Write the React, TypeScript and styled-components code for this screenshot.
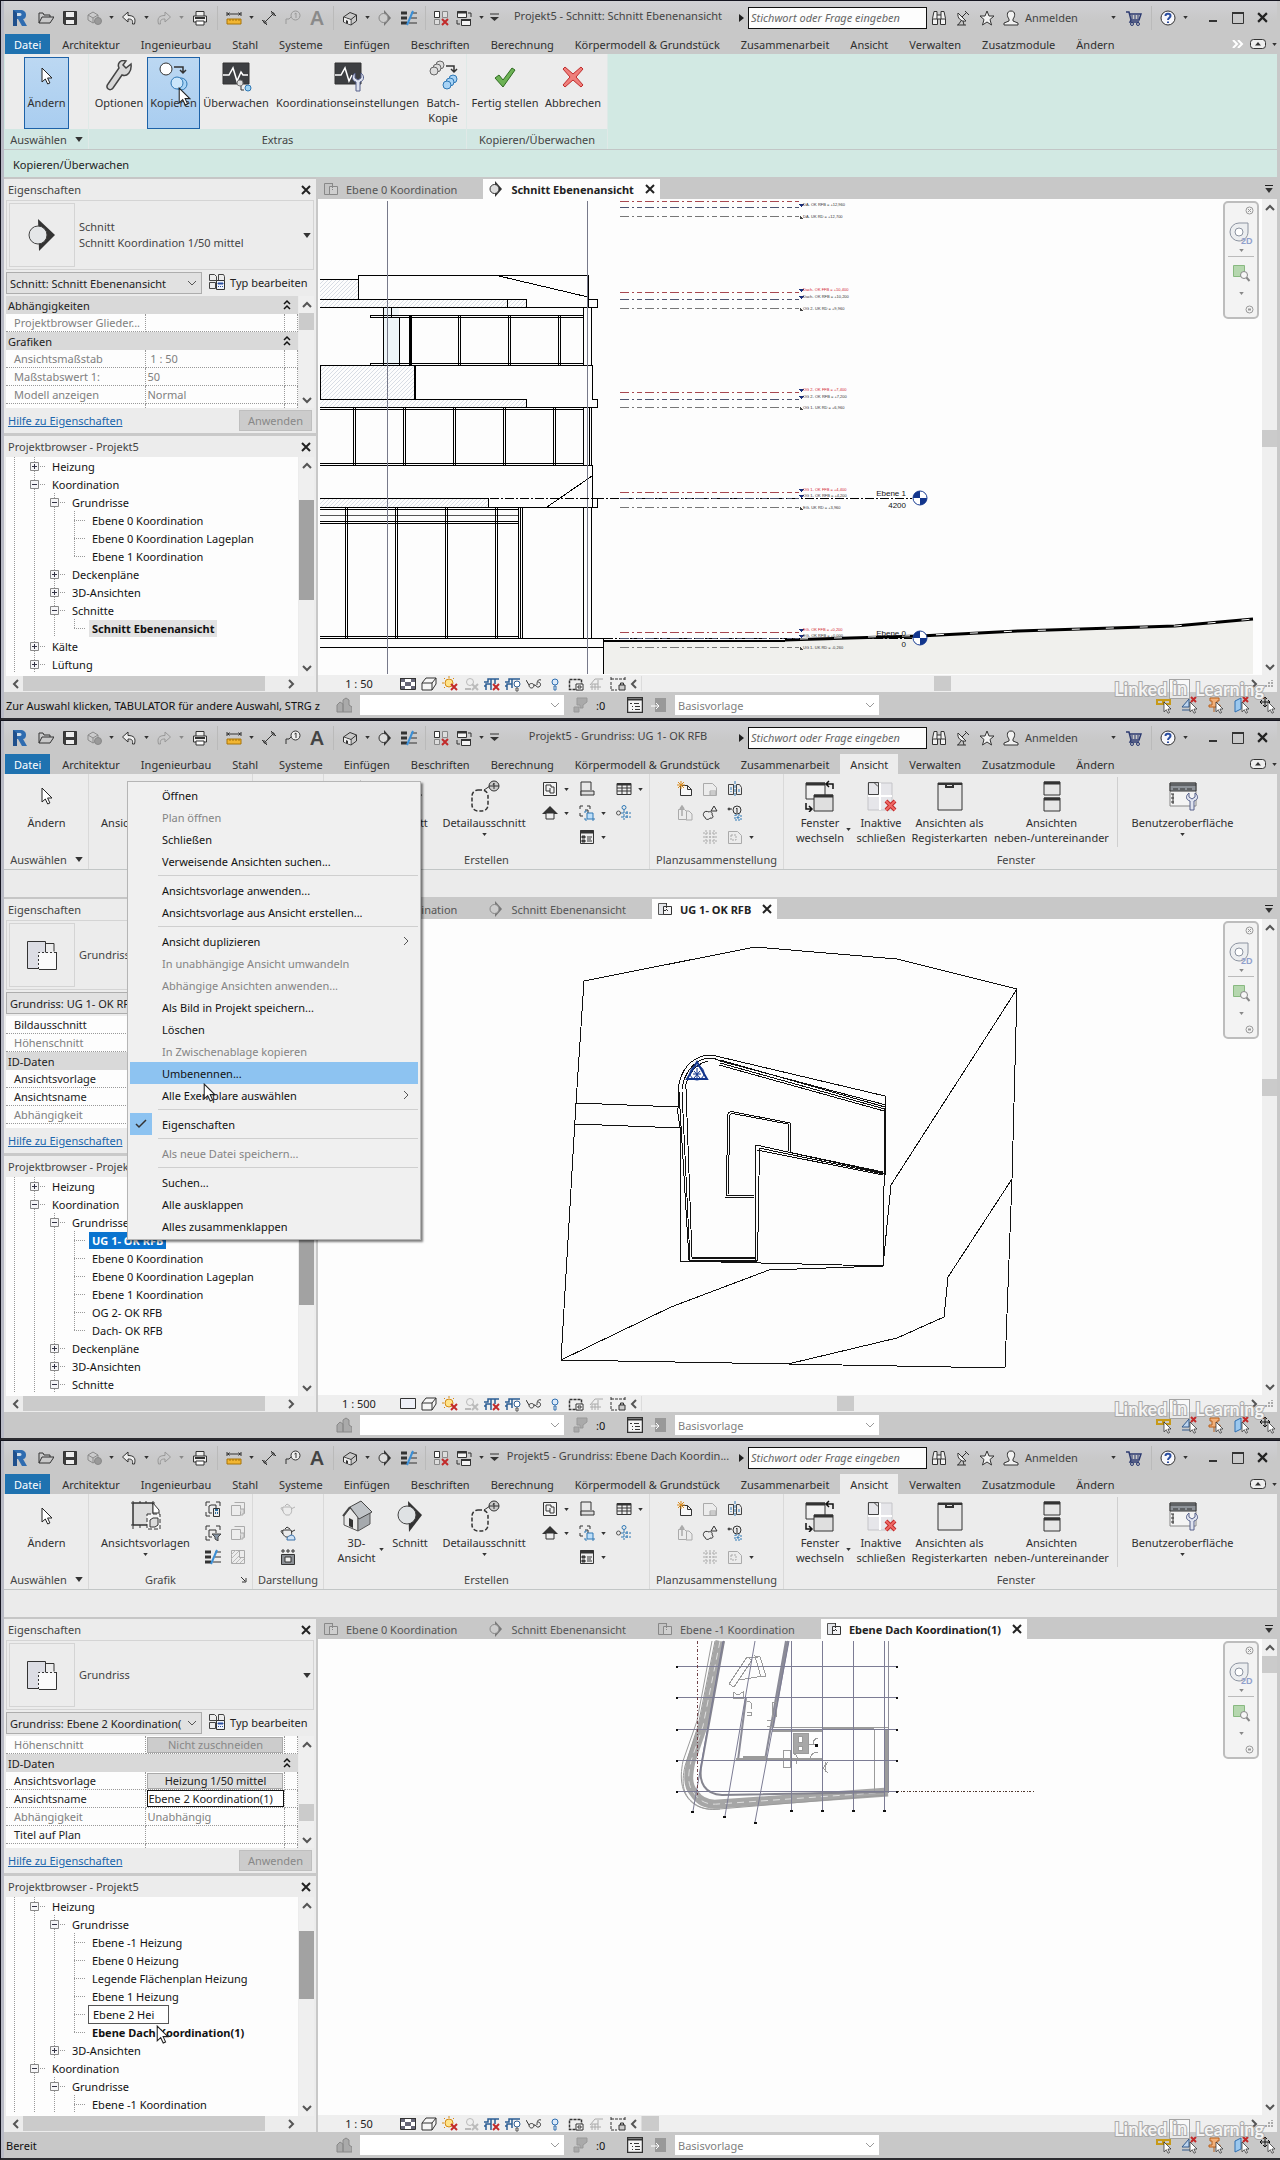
import React from "react";
import styled, { createGlobalStyle, css } from "styled-components";

const UI = `"Noto Sans", "Open Sans", "Liberation Sans", sans-serif`;

const Global = createGlobalStyle`
  * { box-sizing: border-box; }
  body { margin: 0; background: #c8c8c8; font-family: ${UI}; font-size: 11px; line-height: 15px; color: #2f2f2f; }
  button, input, select { font: inherit; color: inherit; margin: 0; padding: 0; border: 0; background: none; border-radius: 0; }
  svg { display: block; flex: none; }
`;

/* ---------- shared icon helpers ---------- */

type IconProps = { w?: number; h?: number; vb?: string; children?: React.ReactNode };
const Svg = ({ w = 16, h = w, vb = "0 0 16 16", children }: IconProps) => (
  <svg width={w} height={h} viewBox={vb} fill="none" stroke="#333" strokeWidth="1" aria-hidden="true">
    {children}
  </svg>
);
const Big = ({ children }: { children: React.ReactNode }) => (
  <Svg w={32} vb="0 0 32 32">{children}</Svg>
);
const Down = ({ color = "#333", s = 5 }: { color?: string; s?: number }) => (
  <Svg w={s} h={s === 5 ? 3 : 5} vb="0 0 6 4"><path d="M0 0h6L3 4z" fill={color} stroke="none" /></Svg>
);
const Chevron = ({ dir = "down", color = "#555", bold = true }: { dir?: string; color?: string; bold?: boolean }) => {
  const d: Record<string, string> = {
    down: "M1 3l4 4 4-4", up: "M1 7l4-4 4 4", left: "M7 1L3 5l4 4", right: "M3 1l4 4-4 4",
  };
  return <Svg w={10} vb="0 0 10 10"><path d={d[dir]} stroke={color} strokeWidth={bold ? 2 : 1} /></Svg>;
};
const Cross = ({ s = 10 }: { s?: number }) => (
  <Svg w={s} vb="0 0 10 10"><path d="M1 1l8 8M9 1L1 9" stroke="#222" strokeWidth="2" /></Svg>
);
const RedX = ({ x, y, s = 6 }: { x: number; y: number; s?: number }) => (
  <path d={`M${x} ${y}l${s} ${s}M${x + s} ${y}l${-s} ${s}`} stroke="#c22a2a" strokeWidth="2" />
);
const Arrow = () => (
  <path d="M0 0v14l3.300-3 2.400 5 2.200-1-2.300-5H10z" fill="#fff" stroke="#222" strokeWidth="1" />
);

/* ---------- quick access icons ---------- */

const I: Record<string, React.ReactNode> = {
  logo: (
    <Svg w={18} vb="0 0 18 18">
      <path d="M3 1h7c4 0 6 2 6 5 0 2-1 4-3 4l4 7h-5l-4-7H7v7H3z" fill="#2f6cb0" stroke="none" />
      <path d="M7 4h3c2 0 2 3 0 3H7z" fill="#cfdcea" stroke="none" />
      <path d="M3 1l4 3v13H3z" fill="#1f4f8c" stroke="none" />
    </Svg>
  ),
  open: <Svg><path d="M1 13V3h4l1 2h6v2M1 13l3-6h12l-4 6z" /></Svg>,
  save: <Svg><path d="M1.500 1.500h13v13h-12l-1-1z" fill="#3c3c3c" /><path d="M4 2h8v5H4zM4 10h8v4H4z" fill="#eee" stroke="none" /></Svg>,
  sync: <Svg><path d="M2 5l5-3 5 3v5l-5 3-5-3zM2 5l5 3 5-3M7 8v5" stroke="#8b8b8b" /><circle cx="12" cy="11" r="3.500" fill="#999" stroke="#888" /></Svg>,
  undo: <Svg><path d="M7 2L1.500 7 7 12V9c4 0 5 1 4.500 5h2C15 8 13 5.500 7 5.500z" fill="#eee" /></Svg>,
  redo: <Svg><path d="M9 2l5.500 5L9 12V9c-4 0-5 1-4.500 5h-2C1 8 3 5.500 9 5.500z" stroke="#999" /></Svg>,
  print: <Svg><path d="M4 6V1.500h8V6M1.500 6h13v6h-13z" fill="#eee" /><path d="M3 8h10" strokeWidth="2" /><path d="M4 11h8v4H4z" fill="#fff" /></Svg>,
  measure: <Svg><path d="M1 4h14M1 2v4M15 2v4M3.500 2.500L2 4l1.500 1.500M12.500 2.500L14 4l-1.500 1.500" /><path d="M1 9h14v5H1z" fill="#f2b632" stroke="#a87508" /><path d="M4 9v2M7 9v2M10 9v2M13 9v2" stroke="#a87508" /></Svg>,
  dim: <Svg><path d="M3 13L13 3M1 10l5 5M10 1l5 5M3 10v3h3M10 3h3v3" /></Svg>,
  tag: <Svg><path d="M1 14V9h3l2-2M1 9" /><circle cx="10.500" cy="5.500" r="4.500" fill="#eee" /><path d="M9.500 4l1.500-1v5" /></Svg>,
  tagDim: <Svg><path d="M1 14V9h3l2-2" stroke="#999" /><circle cx="10.500" cy="5.500" r="4.500" stroke="#999" /><path d="M9.500 4l1.500-1v5" stroke="#999" /></Svg>,
  house: <Svg><path d="M1.500 7L8 2.500 14.500 5v6L9 15l-7.500-3z" fill="#c9c9c9" /><path d="M1.500 7L9 9.500 14.500 5M9 9.500V15" /><path d="M2 7.500l6.500 2.500v4.500L2 12z" fill="#eee" stroke="none" /><path d="M4 10v3l2 1v-3z" fill="#333" stroke="none" /></Svg>,
  section: <Svg><path d="M7 0l7 8-7 8z" fill="#333" stroke="none" /><circle cx="6.500" cy="8" r="4.500" fill="#ddd" /></Svg>,
  sectionDim: <Svg><path d="M7 0l7 8-7 8z" fill="#777" stroke="none" /><circle cx="6.500" cy="8" r="4.500" fill="#ccc" stroke="#888" /></Svg>,
  thin: <Svg><path d="M0 3h6M0 8h6M0 13h6" strokeWidth="3" /><path d="M10 3h6M10 8h6M8 13h8" /><path d="M12 1L6 15" stroke="#3b8fd6" strokeWidth="2" /></Svg>,
  closeHidden: <Svg><path d="M1.500 1.500h5v6h-5zM9.500 1.500h5v6h-5zM1.500 9.500h5v5h-5z" stroke="#888" fill="#ddd" /><path d="M1.500 7.500v-6h5v6z" fill="#fff" /><RedX x={9} y={9} /></Svg>,
  switchWin: <Svg><path d="M1.500 1.500h9v6h-9zM5.500 9.500h9v6h-9z" fill="#f4f4f4" /><path d="M1 2.500h10M5 10h10" strokeWidth="2" /><path d="M12 3h3v4M1 10v4h3" /></Svg>,
  binoc: <Svg><path d="M3 1.500h3V5h4V1.500h3l1.500 7v6h-5V9h-3v5.500h-5v-6z" fill="#f2f2f2" /><path d="M1.500 9h5M9.500 9h5M6 5v4M10 5v4" /></Svg>,
  dish: <Svg><path d="M3 3c-1 5 3 9 8 8z" fill="#f2f2f2" /><path d="M7 7l5-5M3 15l3-4M9 15l-1-4M2 15h9M10 1l4 4" /></Svg>,
  star: <Svg><path d="M8 1l2 5h5l-4 3.500 1.500 5.500L8 12l-4.500 3L5 9.500 1 6h5z" fill="#f2f2f2" /></Svg>,
  person: <Svg><path d="M8 1c5 0 4 6 2 8v2l5 2v2H1v-2l5-2V9C4 7 3 1 8 1z" fill="#f2f2f2" /></Svg>,
  cart: <Svg><path d="M0 2h3l2 8h8l2-6H4M5 10l-1 2h9" stroke="#2c3a70" strokeWidth="1.500" /><circle cx="6" cy="14" r="1.500" stroke="#2c3a70" /><circle cx="12" cy="14" r="1.500" stroke="#2c3a70" /><path d="M6 5v4M9 5v4M12 5v4" stroke="#2c3a70" /></Svg>,
  help: <Svg><circle cx="8" cy="8" r="7" fill="#f7f7fb" /><path d="M5.500 6c0-3 5-3 5 0 0 1.500-2.500 2-2.500 4M8 11.500v1.500" stroke="#2b4ea0" strokeWidth="2" /></Svg>,
  plan: <Svg><path d="M1.500 2.500h8v11h-8z" fill="#e4e6ea" stroke="#555" /><path d="M6.500 5.500h8v8h-8z" fill="#f4f4f6" stroke="#333" /><path d="M9.500 2v7M7 9.500h4" strokeDasharray="2 1" /></Svg>,
  planDim: <Svg><path d="M1.500 2.500h8v11h-8z" fill="#c4c4c4" stroke="#888" /><path d="M6.500 5.500h8v8h-8z" fill="#cfcfcf" stroke="#888" /><path d="M9.500 2v7" stroke="#888" strokeDasharray="2 1" /></Svg>,
  typeEdit: <Svg w={18} vb="0 0 18 18"><path d="M1.500 1.500h5l2 2v4h-7zM10.500 1.500h5l1 2v4h-6zM1.500 9.500h6v6h-6z" stroke="#444" /><path d="M8.500 7.500h8v9h-8z" fill="#eef2fa" /><path d="M10 10h5v1h-5z" fill="#2b4ea0" stroke="#2b4ea0" /><path d="M10 13.500h1M12 13.500h1M14 13.500h1" stroke="#2b4ea0" /></Svg>,
};

/* ---------- ribbon icons ---------- */

const B: Record<string, React.ReactNode> = {
  pointer: <Big><g transform="translate(11 8)"><Arrow /></g></Big>,
  wrench: <Big><path d="M28 4l-5 4-3-3 3-4c-6-2-9 3-7 7L5 24c-3 4 2 8 5 4l9-13c5 2 10-3 9-11z" fill="#d7d7d7" stroke="#444" strokeWidth="1.500" /></Big>,
  copy: <Big><circle cx="8" cy="9" r="6" fill="#fff" /><path d="M16 7h9v6M22 10l3 3 3-3" strokeWidth="1.500" /><circle cx="23" cy="24" r="6" fill="#a8d3f5" stroke="#2f78b5" /><circle cx="19" cy="23" r="6" fill="#cbe6fb" stroke="#2f78b5" /></Big>,
  monitor: <Big><path d="M3 3h26v21H3z" fill="#3d3f42" /><path d="M3 15h6l4-7 4 13 4-9 2 3h5" stroke="#fff" strokeWidth="1.500" /><circle cx="20" cy="23" r="3" fill="#ddd" stroke="#777" /><path d="M21 26v4h3" /><circle cx="28" cy="28" r="3" fill="#9fd4f4" stroke="#2f78b5" /></Big>,
  settings: <Big><path d="M3 3h26v21H3z" fill="#3d3f42" /><path d="M3 15h6l4-7 4 13 3-6" stroke="#fff" strokeWidth="1.500" /><path d="M23 13v5l3 2 3-2v-5c4 3 3 8-1 9v9h-4v-9c-4-1-5-6-1-9z" fill="#dfe3ef" stroke="#56608a" /></Big>,
  batch: <Big><g stroke="#666" fill="#ddd"><circle cx="13" cy="5" r="4" /><circle cx="10" cy="8" r="4" /><circle cx="7" cy="11" r="4" /></g><path d="M19 6h8v6M24 9l3 3 3-3" strokeWidth="1.500" /><g stroke="#2f78b5" fill="#a8d3f5"><circle cx="26" cy="19" r="4" /><circle cx="23" cy="22" r="4" /><circle cx="20" cy="25" r="4" /></g></Big>,
  check: <Big><path d="M6 18l4-3 4 5 9-12 3 2-12 17z" fill="#6db255" stroke="#2f6b21" /></Big>,
  cancel: <Big><path d="M8 7l8 7 8-7 2 2-7 8 7 8-2 2-8-7-8 7-2-2 7-8-7-8z" fill="#ef7f7b" stroke="#c02c2c" /></Big>,
  template: <Big><path d="M3 3h20v22H3z" fill="#dcdcdc" /><path d="M1 3h24M1 25h16M3 1v28M23 1v4M10 1v2M16 1v2M10 25v3" /><path d="M23 3l6 7v3h-6z" fill="#fff" /><path d="M17 14h13v15H17z" fill="#f4f4f4" strokeDasharray="4 2" /><path d="M20 20l3-2h5v7l-3 2h-5z" fill="#ddd" /></Big>,
  house3d: <Big><path d="M3 16v9l14 6V17L9 8z" fill="#e9e9e9" stroke="#555" /><path d="M17 18l12-6v12l-12 7z" fill="#a5a9ad" stroke="#555" /><path d="M9 7L20 1l11 11-13 7z" fill="#bfc3c7" stroke="#444" /><path d="M9 7l-7 9" stroke="#444" strokeWidth="2" /><path d="M8 18v8l4 2v-8z" fill="#333" stroke="none" /></Big>,
  section: <Big><path d="M14 1l14 14-13 17z" fill="#333" stroke="none" /><circle cx="13" cy="15" r="9" fill="#dfe2e4" stroke="#444" /></Big>,
  detail: <Big><rect x="4" y="10" width="16" height="21" rx="6" strokeDasharray="4 2" strokeWidth="1.500" /><path d="M16 10l6-4" /><circle cx="26" cy="6" r="5" fill="#ccc" /><path d="M21 6h10M25 5l1-2v6" /></Big>,
  winSwitch: <Big><path d="M2 3h19v16H2z" fill="#f1f1f1" /><path d="M2 4h19" strokeWidth="3" /><path d="M10 15h19v16H10z" fill="#dfdfdf" /><path d="M10 16h19" strokeWidth="3" /><path d="M23 4h6v5M25 1l-3 3 3 3M2 23v6h6M5 26l3 3-3 3" strokeWidth="1.500" stroke="#111" /></Big>,
  inactive: <Big><path d="M3 3h24v27H3z" fill="#e6e6ea" stroke="#c4c4c8" /><path d="M15 3v27M3 16h24" stroke="#fff" strokeWidth="2" /><path d="M3.500 2.500h10v12h-10zM9 2.500l4 4" stroke="#444" /><path d="M21 21l9 9M30 21l-9 9" stroke="#c22a2a" strokeWidth="4" /><path d="M21 21l9 9M30 21l-9 9" stroke="#ef6a66" strokeWidth="2" /></Big>,
  tabs: <Big><path d="M4 3h24v27H4z" fill="#e8e8e8" /><path d="M4 4h24M12 3v4h7V3" strokeWidth="2" /></Big>,
  tile: <Big><path d="M8 2h16v13H8zM8 18h16v13H8z" fill="#e6e6e6" /><path d="M8 3h16M8 19h16" strokeWidth="3" /></Big>,
  userUi: <Big><path d="M3 3h26v23H3z" fill="#f4f4f4" stroke="#888" /><path d="M3 3h26v8H3z" fill="#8e9399" /><path d="M6 9h5M13 9h5M20 9h5M3 5h26M6 14v10M4 14h3M4 18h3M4 22h3" stroke="#333" /><path d="M22 13v4l3 2 3-2v-4c4 3 3 7-1 8v9h-4v-9c-4-1-5-5-1-8z" fill="#dfe3ef" stroke="#56608a" /></Big>,
};

const S: Record<string, React.ReactNode> = {
  g1: <Svg><path d="M1 5V1h4M11 1h4v4M1 11v4h4" /><path d="M4 5l2-1h5v3M4 5v7h3M8.500 7.500h6v8h-6z" /><path d="M10 9h3M10 12h1M12 12h1" stroke="#2b6ea0" strokeWidth="2" /></Svg>,
  g2: <Svg><path d="M4.500 1.500h10v11M1.500 4.500h9v10h-9z" stroke="#aaa" /><path d="M10 8h4v5h-2v2" stroke="#aaa" fill="#ddd" /></Svg>,
  g3: <Svg><path d="M1 5V1h4M11 1h4v4M1 11v4h4M4 5h7v3M4 5v7h3" /><path d="M7 9h9l-3 3v4l-3-2v-2z" fill="#8a98a8" stroke="#444" /></Svg>,
  g5: I.thin,
  g6: <Svg><path d="M1.500 1.500h13v13h-13zM9.500 1.500v7h5" stroke="#aaa" /><path d="M1 6l5-5M1 10l8-8M2 14l7-7M6 14l5-5M10 14l4-4" stroke="#bbb" /></Svg>,
  potDim: <Svg><path d="M3 6h8c2 5-1 8-2 8H6C4 13 2 10 3 6zM3 7C1 6 0 7 3 10M11 8l4-2M5 5l2-2 3 2" stroke="#b4b4b4" /></Svg>,
  pot: <Svg><path d="M3 5h8c2 5-1 7-2 7H6C4 11 2 9 3 5zM3 6C1 5 0 6 3 9M11 7l4-2M5 4l2-2 3 2" /><path d="M7 14c0-3 3-3 4-4 3 0 4 2 4 5H7z" fill="#cfe2f5" stroke="#3a70a8" /></Svg>,
  gallery: <Svg><path d="M2 1h2v2H2zM7 1h2v2H7zM12 1h2v2h-2z" /><path d="M1.500 5.500h13v10h-13z" fill="#8b8f94" /><path d="M5 8h6v5H5z" fill="#eee" /></Svg>,
  dup: <Svg><path d="M1.500 1.500h13v13h-13z" fill="#f4f4f4" /><path d="M4 4h5v2h3v6H8v-2H4zM8 7v3" /></Svg>,
  sheetView: <Svg><path d="M2 15V1h10v8" fill="#e8e8e8" /><path d="M2 10h13v4H2z" fill="#ddd" /></Svg>,
  schedule: <Svg><path d="M1 2.500h14v11H1z" fill="#eee" /><path d="M1 3.500h14" strokeWidth="2" /><path d="M1 7h14M1 10h14M6 4v9M11 4v9" /></Svg>,
  elevation: <Svg><path d="M8 1l8 8H0z" fill="#333" stroke="none" /><path d="M4 8h8v6H4z" fill="#eee" /></Svg>,
  scope: <Svg><path d="M1 4V1h3M8 1h3v3M1 8v3h3" /><path d="M6 5h3v3" /><path d="M8 8h6v6H8z" fill="#bfe0fa" stroke="#2f78b5" /><path d="M6 8V6h2M15 13v2h-2M6 13v2h2" stroke="#2f78b5" /></Svg>,
  breakdown: <Svg><circle cx="8" cy="2.500" r="2" stroke="#2f78b5" /><circle cx="2.500" cy="8" r="2" stroke="#555" /><path d="M8 5v10M5 8h10M5 12h10M11 6v8" stroke="#2f78b5" strokeDasharray="3 1" /></Svg>,
  legend: <Svg><path d="M1.500 1.500h13v13h-13z" fill="#eee" /><path d="M1 3h14" strokeWidth="3" /><path d="M3 7h3v2H3zM3 11h3v2H3z" fill="#555" /><path d="M8 8h5M8 10h4M8 12h5" /></Svg>,
  newSheet: <Svg><path d="M3.500 4.500h7l4 4v6h-11z" fill="#f7f7f7" /><path d="M10.500 4.500v4h4" /><path d="M4 0v8M0 4h8M1 1l6 6M7 1L1 7" stroke="#d98b1e" /></Svg>,
  titleblk: <Svg><path d="M1.500 2.500h9l4 4v8h-13z" stroke="#aaa" /><path d="M8 10h6v4H8zM8 12h6" stroke="#aaa" /></Svg>,
  matchline: <Svg><path d="M1.500 3.500h5v10h-5zM9.500 3.500h3l2 3v7h-5z" stroke="#444" /><path d="M8 0v16M4 6v5M12 8v4" stroke="#2f78b5" strokeDasharray="3 1" /></Svg>,
  revDim: <Svg><path d="M1.500 4.500h6l2 2v8h-8zM9 6h3l3 3v6H9" stroke="#aaa" /><path d="M5 11V2M3 4l2-3 2 3" stroke="#aaa" strokeWidth="1.500" /></Svg>,
  cloud: <Svg><path d="M2 8c-1 0-1 4 1 4 0 3 4 3 5 1 3 1 4-2 2-3 1-3-2-4-3-3-2-1-5-1-5 1z" /><path d="M12 1l3 5H9z" /></Svg>,
  refView: <Svg><path d="M1 4h4" /><circle cx="2" cy="4" r="1" /><circle cx="10" cy="5" r="4" /><path d="M9 4l1-1v5" /><path d="M8 10h6v5H8z" stroke="#2f78b5" strokeDasharray="2 1" /><path d="M10 12h2v1h-2z" stroke="#2f78b5" /></Svg>,
  gridDim: <Svg><path d="M1 4h14M1 8h14M1 12h14M4 1v14M8 1v14M12 1v14" stroke="#aaa" strokeDasharray="2 1" /></Svg>,
  vpDim: <Svg><path d="M1.500 2.500h9l4 4v8h-13z" stroke="#aaa" /><path d="M4 6h5v5H4z" stroke="#aaa" strokeDasharray="2 1" /></Svg>,
};

/* ---------- window chrome ---------- */

const Frame = styled.section`
  position: relative;
  display: flex;
  flex-direction: column;
  min-height: 720px;
  border-top: 1px solid #14141f;
  border-bottom: 2px solid #2c2c30;
  border-left: 1px solid #14141f;
  padding: 0 3px;
  background: #c8c8c8;
  box-shadow: inset 3px 0 #b9bbc6;
`;
const TitleBar = styled.header`
  display: flex;
  align-items: center;
  height: 33px;
  padding-right: 2px;
  background: linear-gradient(#d0d0d4, #c8c8c8 60%);
`;
const ToolButton = styled.button<{ $wide?: number }>`
  display: flex;
  align-items: center;
  justify-content: center;
  flex: none;
  width: ${(p) => p.$wide ?? 24}px;
  height: 24px;
`;
const Sep = styled.span`
  flex: none;
  width: 1px;
  height: 24px;
  margin: 0 4px;
  background: #bababa;
`;
const LetterA = styled.span<{ $dim?: boolean }>`
  font-size: 20px;
  line-height: 24px;
  font-weight: 600;
  color: ${(p) => (p.$dim ? "#8a8a8a" : "#444")};
`;
const WindowTitle = styled.h1`
  flex: 1;
  min-width: 0;
  margin: 0;
  padding-bottom: 4px;
  font-size: 11px;
  font-weight: 400;
  text-align: center;
  white-space: nowrap;
  overflow: hidden;
  text-overflow: ellipsis;
  color: #444;
`;
const Search = styled.input`
  flex: none;
  width: 179px;
  height: 22px;
  padding: 0 2px;
  border: 1px solid #111;
  background: #fdfdfd;
  font-style: italic;
  font-size: 11px;
  &::placeholder { color: #666; opacity: 1; }
`;
const SignIn = styled.button`
  display: flex;
  align-items: center;
  flex: none;
  width: 122px;
  height: 24px;
  padding: 0 5px 0 4px;
  gap: 6px;
  color: #444;
  svg:last-child { margin-left: auto; }
`;
const WinControls = styled.div`
  display: flex;
  margin-left: 9px;
`;
const MenuTabs = styled.nav`
  display: flex;
  gap: 1px;
  height: 20px;
  padding-left: 1px;
  background: #c8c8c8;
`;
const MenuTab = styled.button<{ $active?: boolean; $file?: boolean }>`
  flex: none;
  height: 20px;
  padding: 0 10px;
  white-space: nowrap;
  ${(p) => p.$active && css`background: #ececec;`}
  ${(p) => p.$file && css`background: #1f72b0; color: #fff; padding: 0 9px; margin-right: 1px;`}
`;
const TabsRight = styled.div`
  display: flex;
  align-items: center;
  gap: 6px;
  margin-left: auto;
`;
const Ribbon = styled.div<{ $teal?: boolean }>`
  display: flex;
  height: 96px;
  padding-left: 1px;
  border-bottom: 1px solid #c2c6c6;
  background: ${(p) => (p.$teal ? "#d2e9e3" : "#ececec")};
`;
const Panel = styled.section<{ $w?: number; $teal?: boolean; $last?: boolean }>`
  display: flex;
  flex-direction: column;
  flex: none;
  min-width: ${(p) => p.$w ?? 0}px;
  border-right: ${(p) => (p.$last ? "0" : `1px solid ${p.$teal ? "#dfe9e7" : "#d9d9d9"}`)};
  background: #ececec;
`;
const PanelBody = styled.div<{ $pad?: number; $center?: boolean }>`
  display: flex;
  flex: 1;
  padding: 3px 0 0 ${(p) => (p.$center ? 0 : p.$pad ?? 2)}px;
  justify-content: ${(p) => (p.$center ? "center" : "flex-start")};
`;
const PanelTitle = styled.div<{ $teal?: boolean }>`
  display: flex;
  align-items: center;
  justify-content: center;
  gap: 8px;
  height: 20px;
  color: #444;
  ${(p) => p.$teal && css`background: #d2e7e3;`}
`;
const TitleText = styled.span`
  flex: 1;
  text-align: center;
`;
const Launcher = styled.button`
  width: 12px;
  height: 12px;
`;
const BigButton = styled.button<{ $on?: boolean; $min?: number }>`
  display: flex;
  flex: none;
  min-width: ${(p) => p.$min ?? 0}px;
  height: 72px;
  padding: 3px 2px 0;
  ${(p) => p.$on && css`background: linear-gradient(#bcd8f2, #a9cdf0); box-shadow: inset 0 0 0 1px #1d62a8;`}
`;
const BigInner = styled.span`
  display: flex;
  flex: 1;
  flex-direction: column;
  align-items: center;
  gap: 3px;
  white-space: pre-line;
  text-align: center;
`;
const SideCaret = styled.span`
  display: flex;
  width: 7px;
  margin: 48px -2px 0 0;
`;
const SmallGrid = styled.div<{ $cols: number; $cell: number; $ml?: number }>`
  display: grid;
  grid-template-columns: repeat(${(p) => p.$cols}, ${(p) => p.$cell}px);
  grid-auto-rows: 24px;
  margin-left: ${(p) => p.$ml ?? 0}px;
`;
const SmallButton = styled.button`
  display: flex;
  align-items: center;
  gap: 6px;
  padding-left: 4px;
`;
const InnerSep = styled.span`
  width: 1px;
  height: 70px;
  margin: 0 10px 0 4px;
  background: #cfcfcf;
`;
const OptionsBar = styled.div<{ $teal?: boolean }>`
  height: 27px;
  padding: 7px 9px 5px;
  color: #222;
  background: ${(p) => (p.$teal ? "#d2e9e3" : "#ebebeb")};
`;
const Workspace = styled.div`
  display: flex;
  flex: 1;
`;

/* ---------- left dock ---------- */

const Dock = styled.aside`
  display: flex;
  flex-direction: column;
  flex: none;
  width: 312px;
  margin-right: 2px;
  padding: 0 2px;
  background: #ececec;
  border-top: 2px solid #c6c6c6;
`;
const DockHead = styled.header`
  display: flex;
  align-items: center;
  justify-content: space-between;
  height: 21px;
  padding: 0 3px 0 2px;
  color: #444;
`;
const IconButton = styled.button`
  display: flex;
  align-items: center;
  justify-content: center;
`;
const TypeBox = styled.div`
  display: flex;
  align-items: center;
  gap: 4px;
  height: 70px;
  padding: 2px;
  border: 1px solid #d4d4d4;
  color: #444;
  > button:last-child { margin-left: auto; }
`;
const Thumb = styled.div`
  display: flex;
  align-items: center;
  justify-content: center;
  width: 66px;
  height: 64px;
  border: 1px solid #d4d4d4;
`;
const TypeText = styled.div`
  line-height: 16px;
  white-space: pre-line;
`;
const PickRow = styled.div`
  display: flex;
  align-items: flex-start;
  gap: 6px;
  height: 26px;
  padding-top: 2px;
`;
const SelectWrap = styled.span<{ $w: number; $h?: number; $plain?: boolean }>`
  display: grid;
  align-items: center;
  flex: none;
  width: ${(p) => p.$w}px;
  height: ${(p) => p.$h ?? 22}px;
  background: ${(p) => (p.$plain ? "#fff" : "#e1e1e1")};
  border: ${(p) => (p.$plain ? "0" : "1px solid #adadad")};
  > * { grid-area: 1 / 1; }
  > svg { justify-self: end; margin-right: 4px; pointer-events: none; }
`;
const Select = styled.select<{ $dim?: boolean }>`
  appearance: none;
  width: 100%;
  height: 20px;
  padding: 0 18px 0 3px;
  color: ${(p) => (p.$dim ? "#808080" : "#222")};
`;
const EditType = styled.button`
  display: flex;
  align-items: center;
  gap: 4px;
  height: 20px;
  color: #222;
`;
const GridRow = styled.div`
  display: flex;
  height: 112px;
  overflow: hidden;
`;
const PropTable = styled.table`
  flex: 1;
  width: 291px;
  height: 126px;
  table-layout: fixed;
  border-collapse: separate;
  border-spacing: 0;
  background: #fdfdfd;
`;
const GroupCell = styled.th`
  height: 18px;
  padding: 0 2px;
  background: #d9d9d9;
  color: #222;
  font-weight: 400;
  text-align: left;
`;
const GroupHead = styled.span`
  display: flex;
  align-items: center;
  justify-content: space-between;
  padding-right: 2px;
`;
const Cell = styled.td<{ $dim?: boolean; $name?: boolean }>`
  height: 18px;
  padding: 0 0 0 ${(p) => (p.$name ? 8 : 1)}px;
  line-height: 15px;
  white-space: nowrap;
  border-bottom: 1px dotted #999;
  border-right: 1px dotted #999;
  color: ${(p) => (p.$dim ? "#808080" : "#222")};
`;
const ValueButton = styled.button<{ $dim?: boolean }>`
  display: block;
  width: 136px;
  height: 16px;
  line-height: 14px;
  background: ${(p) => (p.$dim ? "#cccccc" : "#dddddd")};
  border: 1px solid #aaa;
  color: ${(p) => (p.$dim ? "#888" : "#222")};
`;
const ValueInput = styled.input`
  display: block;
  width: 137px;
  height: 17px;
  padding: 0;
  border: 1px solid #111;
  background: #fff;
`;
const DockFoot = styled.div`
  display: flex;
  align-items: center;
  justify-content: space-between;
  height: 25px;
  padding: 0 2px;
  a { color: #2066ad; }
`;
const Apply = styled.button`
  width: 73px;
  height: 21px;
  border: 1px solid #bfbfbf;
  background: #cccccc;
  color: #888;
`;
const Rule = styled.div`
  height: 3px;
  margin: 0 -2px;
  background: #c9c9c9;
`;
const TreeRow = styled.div`
  display: flex;
  flex: 1;
  min-height: 219px;
`;
const Tree = styled.ul`
  flex: 1;
  margin: 0;
  padding: 0;
  list-style: none;
  background: #fdfdfd;
  color: #111;
`;
const Node = styled.li`
  display: flex;
  align-items: center;
  height: 18px;
  white-space: nowrap;
`;
const vDots = "repeating-linear-gradient(#999 0 1px, transparent 1px 2px)";
const hDots = "repeating-linear-gradient(90deg, #999 0 1px, transparent 1px 2px)";
const Guide = styled.span<{ $kind: "v" | "node" | "leaf" | "end" }>`
  display: flex;
  align-items: center;
  flex: none;
  width: 20px;
  height: 18px;
  padding-left: 4px;
  background:
    ${vDots} 8px 0 / 1px ${(p) => (p.$kind === "end" ? "10px" : "100%")} no-repeat
    ${(p) => (p.$kind === "v" ? "" : `, ${hDots} 8px 9px / 12px 1px no-repeat`)};
`;
const Toggle = styled.button`
  display: flex;
  background: #f6f6f8;
`;
const NodeLabel = styled.span<{ $bold?: boolean; $look?: "gray" | "blue" }>`
  margin-left: 3px;
  padding: 0 3px;
  line-height: 17px;
  font-weight: ${(p) => (p.$bold ? 700 : 400)};
  ${(p) => p.$look === "gray" && css`background: #e2e2e2;`}
  ${(p) => p.$look === "blue" && css`background: #0b74cf; color: #fff;`}
`;
const NodeInput = styled.input`
  width: 81px;
  height: 19px;
  margin-left: 2px;
  padding: 0 4px;
  border: 1px solid #555;
  background: #fff;
`;

/* ---------- scroll bars ---------- */

const VTrack = styled.div`
  display: flex;
  flex-direction: column;
  flex: none;
  align-items: stretch;
  width: 15px;
  margin-left: 1px;
  background: #efefef;
`;
const HTrack = styled.div`
  display: flex;
  flex: 1;
  height: 15px;
  background: #efefef;
  border-left: 1px solid #dcdcdc;
`;
const Gap = styled.span<{ $grow: number }>`flex: ${(p) => p.$grow} 1 0;`;
const ScrollThumb = styled.span<{ $len: number; $dark?: boolean; $h?: boolean }>`
  flex: none;
  ${(p) => (p.$h ? `width: ${p.$len}px;` : `height: ${p.$len}px;`)}
  background: ${(p) => (p.$dark ? "#a2a2a2" : "#cbcbcb")};
`;
const ArrowBtn = styled.button`
  display: flex;
  align-items: center;
  justify-content: center;
  flex: none;
  width: 15px;
  height: 17px;
`;

type ScrollProps = { before: number; after: number; len: number; dark?: boolean };
const VScroll = ({ before, after, len, dark }: ScrollProps) => (
  <VTrack>
    <ArrowBtn aria-label="Nach oben"><Chevron dir="up" /></ArrowBtn>
    <Gap $grow={before} /><ScrollThumb $len={len} $dark={dark} /><Gap $grow={after} />
    <ArrowBtn aria-label="Nach unten"><Chevron /></ArrowBtn>
  </VTrack>
);

/* ---------- documents area ---------- */

const Docs = styled.main`
  display: flex;
  flex-direction: column;
  flex: 1;
  min-width: 0;
`;
const DocTabs = styled.div`
  display: flex;
  align-items: flex-end;
  height: 22px;
  padding-right: 4px;
`;
const DocTab = styled.div<{ $active?: boolean }>`
  display: flex;
  align-items: center;
  flex: none;
  height: 20px;
  padding: 0 5px 0 5px;
  gap: 7px;
  background: ${(p) => (p.$active ? "#fdfdfd" : "transparent")};
  color: ${(p) => (p.$active ? "#222" : "#555")};
  font-weight: ${(p) => (p.$active ? 700 : 400)};
`;
const DocLabel = styled.button`
  white-space: nowrap;
  font-weight: inherit;
`;
const CloseSlot = styled.span`
  display: flex;
  width: 14px;
  padding-left: 4px;
`;
const TabList = styled.button`
  display: flex;
  flex-direction: column;
  align-items: center;
  gap: 2px;
  margin: 0 0 6px auto;
  &::before { content: ""; width: 8px; height: 1px; background: #222; }
`;
const CanvasRow = styled.div`
  display: flex;
  flex: 1;
  background: #fdfdfd;
`;
const Canvas = styled.div`
  position: relative;
  flex: 1;
  min-width: 0;
  overflow: hidden;
`;
const ViewBar = styled.div`
  display: flex;
  align-items: center;
  height: 17px;
  background: #efefef;
  color: #222;
`;
const Scale = styled.span`
  width: 82px;
  text-align: center;
`;
const ViewIcons = styled.div`
  display: flex;
  align-items: center;
  gap: 5px;
`;
const NavBar = styled.div`
  position: absolute;
  top: 2px;
  right: 2px;
  display: flex;
  flex-direction: column;
  align-items: center;
  width: 36px;
  height: 118px;
  padding: 3px 3px;
  border: 2px solid #bdbdbd;
  border-radius: 5px;
  background: #f3f3f3;
  > button:first-child, > button:last-child { align-self: flex-end; }
`;
const NavLine = styled.span`
  width: 26px;
  height: 1px;
  margin: 4px 0 7px;
  background: #bbb;
`;
const NavSpace = styled.span`flex: 1;`;
const StatusBar = styled.footer`
  display: flex;
  align-items: center;
  height: 26px;
  color: #111;
`;
const StatusText = styled.span`
  flex: none;
  width: 323px;
  padding-left: 2px;
  white-space: nowrap;
  overflow: hidden;
`;
const StatusGroup = styled.div`
  display: flex;
  align-items: center;
  gap: 8px;
  padding-left: 9px;
`;
const Zero = styled.span`width: 23px;`;
const StatusRight = styled.div`
  display: flex;
  gap: 8px;
  margin-left: auto;
`;
const Watermark = styled.div`
  position: absolute;
  right: 16px;
  bottom: 19px;
  display: flex;
  align-items: center;
  gap: 2px;
  font-family: Lato, "Noto Sans", sans-serif;
  font-size: 18px;
  line-height: 20px;
  font-weight: 700;
  color: #f4f4f4;
  -webkit-text-stroke: 2px #aaaaaa;
  paint-order: stroke fill;
  pointer-events: none;
`;
const InBox = styled.span`
  width: 21px;
  height: 20px;
  margin-right: 3px;
  line-height: 17px;
  text-align: center;
  border: 1px solid #a4a4a4;
  background: rgba(255, 255, 255, 0.6);
`;
const Cursor = styled.span<{ $x: number; $y: number }>`
  position: absolute;
  left: ${(p) => p.$x}px;
  top: ${(p) => p.$y}px;
  pointer-events: none;
`;
const PointerCursor = ({ x, y }: { x: number; y: number }) => (
  <Cursor $x={x} $y={y}>
    <Svg w={13} h={19} vb="-1 -1 12 18"><Arrow /></Svg>
  </Cursor>
);

/* ---------- context menu ---------- */

const Menu = styled.div`
  position: absolute;
  left: 126px;
  top: 60px;
  width: 294px;
  padding: 2px;
  border: 1px solid #b5b5b5;
  background: #f0f0f0;
  box-shadow: 2px 2px 2px rgba(0, 0, 0, 0.5);
`;
const MenuItem = styled.button<{ $hot?: boolean }>`
  display: flex;
  align-items: center;
  width: 100%;
  height: 22px;
  padding-right: 7px;
  text-align: left;
  color: #111;
  &:disabled { color: #848484; }
  ${(p) => p.$hot && css`background: #8dc3f1;`}
  > svg:last-child { margin-left: auto; }
`;
const MenuMark = styled.span<{ $on?: boolean }>`
  display: flex;
  align-items: center;
  justify-content: center;
  width: 22px;
  height: 22px;
  margin-right: 10px;
  ${(p) => p.$on && css`background: #8dc3f1;`}
`;
const MenuRule = styled.hr`
  height: 1px;
  margin: 3px 0 3px 28px;
  border: 0;
  background: #cfcfcf;
`;

const menuItems: Array<{ t: string; off?: boolean; sub?: boolean; hot?: boolean; on?: boolean } | null> = [
  { t: "Öffnen" }, { t: "Plan öffnen", off: true }, { t: "Schließen" }, { t: "Verweisende Ansichten suchen..." },
  null,
  { t: "Ansichtsvorlage anwenden..." }, { t: "Ansichtsvorlage aus Ansicht erstellen..." },
  null,
  { t: "Ansicht duplizieren", sub: true }, { t: "In unabhängige Ansicht umwandeln", off: true },
  { t: "Abhängige Ansichten anwenden...", off: true }, { t: "Als Bild in Projekt speichern..." }, { t: "Löschen" },
  { t: "In Zwischenablage kopieren", off: true }, { t: "Umbenennen...", hot: true }, { t: "Alle Exemplare auswählen", sub: true },
  null,
  { t: "Eigenschaften", on: true },
  null,
  { t: "Als neue Datei speichern...", off: true },
  null,
  { t: "Suchen..." }, { t: "Alle ausklappen" }, { t: "Alles zusammenklappen" },
];

const ContextMenu = () => (
  <Menu role="menu">
    {menuItems.map((m, i) =>
      m ? (
        <MenuItem key={i} role="menuitem" disabled={m.off} $hot={m.hot}>
          <MenuMark $on={m.on}>{m.on && <Svg w={12} vb="0 0 12 12"><path d="M1 6l3 3 7-7" strokeWidth="1.500" /></Svg>}</MenuMark>
          {m.t}
          {m.sub && <Chevron dir="right" bold={false} />}
        </MenuItem>
      ) : (
        <MenuRule key={i} />
      )
    )}
  </Menu>
);

/* ---------- title bar and ribbon ---------- */

const Tool = ({ label, children, w }: { label: string; children: React.ReactNode; w?: number }) => (
  <ToolButton aria-label={label} $wide={w}>{children}</ToolButton>
);
const CaretTool = ({ dim }: { dim?: boolean }) => (
  <Tool label="Mehr" w={11}><Down color={dim ? "#888" : "#333"} /></Tool>
);

const Title = ({ text, dim }: { text: string; dim?: boolean }) => (
  <TitleBar>
    <Tool label="Revit" w={30}>{I.logo}</Tool>
    <Tool label="Öffnen">{I.open}</Tool>
    <Tool label="Speichern">{I.save}</Tool>
    <Tool label="Synchronisieren">{I.sync}</Tool><CaretTool />
    <Tool label="Rückgängig">{I.undo}</Tool><CaretTool />
    <Tool label="Wiederherstellen">{I.redo}</Tool><CaretTool dim />
    <Tool label="Drucken" w={26}>{I.print}</Tool><Sep />
    <Tool label="Messen">{I.measure}</Tool><CaretTool />
    <Tool label="Bemaßung">{I.dim}</Tool>
    <Tool label="Beschriftung">{dim ? I.tagDim : I.tag}</Tool>
    <Tool label="Text"><LetterA $dim={dim}>A</LetterA></Tool><Sep />
    <Tool label="3D-Ansicht">{I.house}</Tool><CaretTool />
    <Tool label="Schnitt">{dim ? I.sectionDim : I.section}</Tool>
    <Tool label="Dünne Linien">{I.thin}</Tool><Sep />
    <Tool label="Inaktive schließen" w={22}>{I.closeHidden}</Tool>
    <Tool label="Fenster wechseln">{I.switchWin}</Tool><CaretTool />
    <Tool label="Anpassen" w={15}><Svg w={9} vb="0 0 9 9"><path d="M0 1h9" strokeWidth="1" /><path d="M0 4h9L4.500 8z" fill="#333" stroke="none" /></Svg></Tool>
    <WindowTitle>{text}</WindowTitle>
    <Tool label="Suche öffnen" w={14}><Svg w={5} h={8} vb="0 0 5 8"><path d="M0 0l5 4-5 4z" fill="#222" stroke="none" /></Svg></Tool>
    <Search aria-label="Suche" placeholder="Stichwort oder Frage eingeben" />
    <Tool label="Suchen">{I.binoc}</Tool>
    <Tool label="Kommunikation">{I.dish}</Tool>
    <Tool label="Favoriten">{I.star}</Tool>
    <SignIn>{I.person}Anmelden<Down /></SignIn>
    <Tool label="Warenkorb" w={26}>{I.cart}</Tool><Sep />
    <Tool label="Hilfe">{I.help}</Tool><CaretTool />
    <WinControls>
      <Tool label="Minimieren" w={25}><Svg w={12} vb="0 0 12 12"><path d="M2 9h8" strokeWidth="2" /></Svg></Tool>
      <Tool label="Maximieren" w={25}><Svg w={12} vb="0 0 12 12"><path d="M.5 1h11v10.500H.5z" /><path d="M0 1h12" strokeWidth="2" /></Svg></Tool>
      <Tool label="Fenster schließen" w={25}><Cross s={11} /></Tool>
    </WinControls>
  </TitleBar>
);

const tabNames = ["Architektur", "Ingenieurbau", "Stahl", "Systeme", "Einfügen", "Beschriften", "Berechnung",
  "Körpermodell & Grundstück", "Zusammenarbeit", "Ansicht", "Verwalten", "Zusatzmodule", "Ändern"];

const Tabs = ({ active, more }: { active?: string; more?: boolean }) => (
  <MenuTabs>
    <MenuTab $file>Datei</MenuTab>
    {tabNames.map((n) => <MenuTab key={n} $active={n === active}>{n}</MenuTab>)}
    <TabsRight>
      {more && <Svg w={12} h={8} vb="0 0 12 8"><path d="M1 0l4 4-4 4M6 0l4 4-4 4" stroke="#fff" strokeWidth="2" /></Svg>}
      <IconButton aria-label="Multifunktionsleiste minimieren">
        <Svg w={16} h={10} vb="0 0 16 10"><rect x=".5" y=".5" width="15" height="9" rx="3" fill="#eee" /><path d="M5 6.500h6L8 3z" fill="#333" stroke="none" /></Svg>
      </IconButton>
      <Down />
    </TabsRight>
  </MenuTabs>
);

type RB = { icon: string; text: string; on?: boolean; min?: number; below?: boolean; side?: boolean };
const RibbonButton = ({ icon, text, on, min, below, side }: RB) => (
  <BigButton $on={on} $min={min}>
    <BigInner>{B[icon]}<span>{text}</span>{below && <Down />}</BigInner>
    {side && <SideCaret><Down /></SideCaret>}
  </BigButton>
);
const Small = ({ icon, label, caret }: { icon: string; label: string; caret?: boolean }) => (
  <SmallButton aria-label={label}>{S[icon]}{caret && <Down />}</SmallButton>
);

const CopyRibbon = () => (
  <Ribbon $teal>
    <Panel $w={84} $teal>
      <PanelBody $center><RibbonButton icon="pointer" text="Ändern" on min={45} /></PanelBody>
      <PanelTitle $teal>Auswählen <Down s={8} /></PanelTitle>
    </Panel>
    <Panel $w={378} $teal>
      <PanelBody>
        <RibbonButton icon="wrench" text="Optionen" min={56} />
        <RibbonButton icon="copy" text="Kopieren" on min={53} />
        <RibbonButton icon="monitor" text="Überwachen" min={72} />
        <RibbonButton icon="settings" text="Koordinationseinstellungen" min={151} />
        <RibbonButton icon="batch" text={"Batch-\nKopie"} min={40} />
      </PanelBody>
      <PanelTitle $teal>Extras</PanelTitle>
    </Panel>
    <Panel $w={141} $teal>
      <PanelBody>
        <RibbonButton icon="check" text="Fertig stellen" min={72} />
        <RibbonButton icon="cancel" text="Abbrechen" min={64} />
      </PanelBody>
      <PanelTitle $teal>Kopieren/Überwachen</PanelTitle>
    </Panel>
  </Ribbon>
);

const ViewRibbon = () => (
  <Ribbon>
    <Panel $w={84}>
      <PanelBody $center><RibbonButton icon="pointer" text="Ändern" min={45} /></PanelBody>
      <PanelTitle>Auswählen <Down s={8} /></PanelTitle>
    </Panel>
    <Panel $w={164}>
      <PanelBody $pad={7}>
        <RibbonButton icon="template" text="Ansichtsvorlagen" below min={99} />
        <SmallGrid $cols={2} $cell={25} $ml={6}>
          <Small icon="g1" label="Vorlage 1" /><Small icon="g2" label="Vorlage 2" />
          <Small icon="g3" label="Filter" /><Small icon="g2" label="Vorlage 3" />
          <Small icon="g5" label="Linien" /><Small icon="g6" label="Schnittprofil" />
        </SmallGrid>
      </PanelBody>
      <PanelTitle>
        <TitleText>Grafik</TitleText>
        <Launcher aria-label="Grafikoptionen"><Svg w={7} vb="0 0 7 7"><path d="M1 1l4 4M6 2v4H2" /></Svg></Launcher>
      </PanelTitle>
    </Panel>
    <Panel $w={71}>
      <PanelBody $center>
        <SmallGrid $cols={1} $cell={24}>
          <Small icon="potDim" label="Rendern" /><Small icon="pot" label="Cloud" /><Small icon="gallery" label="Galerie" />
        </SmallGrid>
      </PanelBody>
      <PanelTitle>Darstellung</PanelTitle>
    </Panel>
    <Panel $w={326}>
      <PanelBody $pad={8}>
        <RibbonButton icon="house3d" text={"3D-\nAnsicht"} side min={54} />
        <RibbonButton icon="section" text="Schnitt" min={48} />
        <RibbonButton icon="detail" text="Detailausschnitt" below min={100} />
        <SmallGrid $cols={3} $cell={37} $ml={4}>
          <Small icon="dup" label="Duplizieren" caret /><Small icon="sheetView" label="Zeichenansicht" /><Small icon="schedule" label="Bauteilliste" caret />
          <Small icon="elevation" label="Ansicht" caret /><Small icon="scope" label="Ausschnitt" caret /><Small icon="breakdown" label="Bereich" />
          <span /><Small icon="legend" label="Legende" caret />
        </SmallGrid>
      </PanelBody>
      <PanelTitle>Erstellen</PanelTitle>
    </Panel>
    <Panel $w={134}>
      <PanelBody $pad={23}>
        <SmallGrid $cols={3} $cell={25}>
          <Small icon="newSheet" label="Plan" /><Small icon="titleblk" label="Plankopf" /><Small icon="matchline" label="Schnittlinie" />
          <Small icon="revDim" label="Revision" /><Small icon="cloud" label="Wolke" /><Small icon="refView" label="Verweis" />
          <span /><Small icon="gridDim" label="Raster" /><Small icon="vpDim" label="Ansichtsfenster" caret />
        </SmallGrid>
      </PanelBody>
      <PanelTitle>Planzusammenstellung</PanelTitle>
    </Panel>
    <Panel $w={464} $last>
      <PanelBody $pad={8}>
        <RibbonButton icon="winSwitch" text={"Fenster\nwechseln"} side min={61} />
        <RibbonButton icon="inactive" text={"Inaktive\nschließen"} min={56} />
        <RibbonButton icon="tabs" text={"Ansichten als\nRegisterkarten"} min={81} />
        <RibbonButton icon="tile" text={"Ansichten\nneben-/untereinander"} min={123} />
        <InnerSep />
        <RibbonButton icon="userUi" text="Benutzeroberfläche" below min={109} />
      </PanelBody>
      <PanelTitle>Fenster</PanelTitle>
    </Panel>
  </Ribbon>
);

/* ---------- dock content ---------- */

type Prop = { group?: string; name?: string; value?: React.ReactNode; dim?: boolean };
const PropertyGrid = ({ rows }: { rows: Prop[] }) => (
  <PropTable>
    <colgroup><col width="140" /><col width="138" /><col width="13" /></colgroup>
    <tbody>
      {rows.map((r, i) =>
        r.group ? (
          <tr key={i}>
            <GroupCell colSpan={3} scope="colgroup">
              <GroupHead>{r.group}<Svg w={14} vb="0 0 14 14"><path d="M4 6l3-3 3 3M4 11l3-3 3 3" stroke="#111" strokeWidth="1.500" /></Svg></GroupHead>
            </GroupCell>
          </tr>
        ) : (
          <tr key={i}>
            <Cell $name $dim={r.dim}>{r.name}</Cell>
            <Cell $dim={r.dim}>{r.value}</Cell>
            <Cell />
          </tr>
        )
      )}
    </tbody>
  </PropTable>
);

type TNode = { l: 1 | 2 | 3; t: string; x?: "+" | "-"; end?: boolean; bold?: boolean; look?: "gray" | "blue"; edit?: boolean };
const TreeView = ({ nodes }: { nodes: TNode[] }) => (
  <Tree>
    {nodes.map((n, i) => (
      <Node key={i}>
        {Array.from({ length: n.l }, (_, k) => <Guide key={k} $kind="v" />)}
        <Guide $kind={n.x ? "node" : n.end ? "end" : "leaf"}>
          {n.x && (
            <Toggle aria-label={n.x === "+" ? "Ausklappen" : "Einklappen"}>
              <Svg w={9} vb="0 0 9 9"><path d="M.5.5h8v8h-8z" stroke="#888" /><path d={n.x === "+" ? "M2 4.500h5M4.500 2v5" : "M2 4.500h5"} stroke="#334" /></Svg>
            </Toggle>
          )}
        </Guide>
        {n.edit ? <NodeInput aria-label="Ansichtsname" defaultValue={n.t} /> : <NodeLabel $bold={n.bold} $look={n.look}>{n.t}</NodeLabel>}
      </Node>
    ))}
  </Tree>
);

const SectionThumb = (
  <Svg w={30} h={34} vb="0 0 30 34"><path d="M11 1l17 16-16 16z" fill="#333" stroke="none" /><circle cx="11" cy="17" r="9" fill="#e4e6e8" stroke="#444" /></Svg>
);
const PlanThumb = (
  <Svg w={32} vb="0 0 32 32">
    <path d="M1.500 2.500h18v27h-18z" fill="#dcdde4" /><path d="M19 4.500h9v8" /><path d="M12.500 13.500h18v17h-18z" fill="#fafafa" stroke="none" /><path d="M30.500 13v17.500H13" /><path d="M12.500 30V13.500h18M19.500 3v10" strokeDasharray="2 2" />
  </Svg>
);

const BrowserScroll = styled.div`
  display: flex;
  height: 15px;
  padding: 0 16px 0 2px;
  margin-bottom: 1px;
  > button { height: 15px; }
`;

type DockProps = {
  thumb: React.ReactNode; type: string; instance: string; props: Prop[]; tree: TNode[];
  grid: ScrollProps; treeScroll: ScrollProps;
};
const LeftDock = ({ thumb, type, instance, props, tree, grid, treeScroll }: DockProps) => (
  <Dock>
    <DockHead>Eigenschaften<IconButton aria-label="Eigenschaften schließen"><Cross /></IconButton></DockHead>
    <TypeBox>
      <Thumb>{thumb}</Thumb><TypeText>{type}</TypeText>
      <IconButton aria-label="Typ wählen"><Down s={8} /></IconButton>
    </TypeBox>
    <PickRow>
      <SelectWrap $w={196}>
        <Select aria-label="Auswahl"><option>{instance}</option></Select>
        <Chevron bold={false} />
      </SelectWrap>
      <EditType>{I.typeEdit}Typ bearbeiten</EditType>
    </PickRow>
    <GridRow><PropertyGrid rows={props} /><VScroll {...grid} /></GridRow>
    <DockFoot><a href="#hilfe">Hilfe zu Eigenschaften</a><Apply disabled>Anwenden</Apply></DockFoot>
    <Rule />
    <DockHead>Projektbrowser - Projekt5<IconButton aria-label="Projektbrowser schließen"><Cross /></IconButton></DockHead>
    <TreeRow><TreeView nodes={tree} /><VScroll {...treeScroll} /></TreeRow>
    <BrowserScroll>
      <ArrowBtn aria-label="Nach links"><Chevron dir="left" /></ArrowBtn>
      <ScrollThumb $len={242} $h /><Gap $grow={1} />
      <ArrowBtn aria-label="Nach rechts"><Chevron dir="right" /></ArrowBtn>
    </BrowserScroll>
  </Dock>
);

/* ---------- drawings ---------- */

const Drawing = styled.svg.attrs({ width: 942, height: 475, viewBox: "318 199 942 475" })`
  font-family: "Liberation Sans", Arial, sans-serif;
`;

const levelGroups = [
  { ys: [201, 207, 216], labels: ["", "DA- OK RFB = +12,960", "DA- UK RD = +12,700"] },
  { ys: [292, 299, 308], labels: ["Dach- OK FFB = +10,400", "Dach- OK RFB = +10,200", "OG 2- UK RD = +9,960"] },
  { ys: [392, 399, 407], labels: ["OG 2- OK FFB = +7,400", "OG 2- OK RFB = +7,200", "OG 1- UK RD = +6,960"] },
  { ys: [492, 498, 507], labels: ["OG 1- OK FFB = +4,400", "OG 1- OK RFB = +4,200", "EG- UK RD = +3,960"] },
  { ys: [632, 638, 647], labels: ["EG- OK FFB = +0,200", "EG- OK RFB = +0,000", "UG 1- UK RD = -0,260"] },
];
const levelColor = ["#a84850", "#4c5470", "#777"];
const LevelMark = ({ y }: { y: number }) => (
  <g transform={`translate(920 ${y})`} shapeRendering="auto">
    <circle r="7" fill="#fff" stroke="#1b3f94" />
    <path d="M0 0V-7A7 7 0 0 0 -7 0zM0 0V7A7 7 0 0 0 7 0z" fill="#12358c" stroke="none" />
  </g>
);
const pairs = (xs: number[], y1: number, y2: number) => xs.map((x) => `M${x} ${y1}V${y2}M${x + 2} ${y1}V${y2}`).join("");

const SectionDrawing = () => (
  <Drawing fill="none" stroke="#000" shapeRendering="crispEdges">
    <defs>
      <pattern id="hatch" width="4" height="4" patternUnits="userSpaceOnUse">
        <path d="M0 4L4 0" stroke="#d8dde5" strokeWidth="1" shapeRendering="auto" />
      </pattern>
    </defs>
    <path d="M604 641l181-1 65-2 70-2 98-5 157-5 78-7v55H604z" fill="#f0f0ed" stroke="none" />
    <path d="M320 279h38v21h-38zM320 300h206v8H320zM321 365h94v34h-94zM320 399h206v8H320zM320 498h168v9H320z" fill="url(#hatch)" stroke="none" />
    <path d="M383 308h16v57h-16z" fill="#edf5f8" stroke="none" />
    <path d="M320 279.500h38M358.500 300V275.500H588.500V308M499 276l89 21M320 299.500h206.500v8M507.500 300v8M320 307.500h277.500v-8h-9" />
    <path d="M383.500 308v57M391.500 308v10M399.500 317v48M370 315.500h213M370 317.500h213M370 363.500h213M370 365.500h222M583.500 308v57M591.500 308v57M370.500 315v3M370.500 363v3" />
    <path d={pairs([409, 458, 508, 558], 316, 365)} />
    <path d="M409.500 316v49" strokeWidth="2" />
    <path d="M320.500 365v34M320 365.500h272.500v34M320 399.500h206.500v8M592.500 399.500h5v8M320 407.500h277.500M320 409.500h263M320 463.500h263M320 465.500h272.500V507" />
    <path d="M415 365v34" strokeWidth="2" />
    <path d={pairs([353, 403, 453, 503, 553, 589], 407, 465)} />
    <path d="M583.500 408v57M320 498.500h168.500v9M320 507.500h277.500v-9h-5M547 507l45-31" />
    <path d="M320 509.500h198M320 521.500h198M320 523.500h198M320 636.500h198M320 638.500h283.500V674M320 647.500h283.500" />
    <path d="M320 515.500h198" stroke="#555" />
    <path d={pairs([345, 395, 445, 495, 518], 508, 638)} />
    <path d="M522.500 508v130M583.500 508v130M591.500 508v130" />
    <path d="M387.500 201v473M587.500 201v473" stroke="#77798a" />
    <path d="M490 498.500h422M604 638.500h308" strokeDasharray="9 2 2 2" />
    <path d="M604 641.500l181-1" strokeWidth="2" />
    <path d="M785 640l65-2 70-2 98-5 157-5 78-7" strokeWidth="3" shapeRendering="auto" />
    <path d="M800 639l50-1.500 70-2 98-4.500 157-5 78-7" stroke="#fff" strokeDasharray="8 26" shapeRendering="auto" />
    {levelGroups.map((g, i) => (
      <g key={i}>
        {g.ys.map((y, k) => (
          <g key={k}>
            <path d={`M620 ${y + 0.5}H799`} stroke={levelColor[k]} strokeDasharray="9 3 2 3 5 3" />
            {g.labels[k] && (
              <>
                <path d={k === 2 ? `M800 ${y}l4 3h-4z` : `M799 ${y - 3}h5l-3 3z`} fill={k === 2 ? "#444" : "#1b2f7c"} stroke="none" />
                <text x="803" y={k === 2 ? y + 2 : y - 1} fontSize="4" stroke="none" fill={k === 0 ? "#d0202c" : "#333"}>{g.labels[k]}</text>
              </>
            )}
          </g>
        ))}
      </g>
    ))}
    <g fill="#111" stroke="none" fontSize="8" textAnchor="end">
      <text x="906" y="496">Ebene 1</text><text x="906" y="508">4200</text>
      <text x="906" y="636">Ebene 0</text><text x="906" y="647">0</text>
    </g>
    <LevelMark y={498} /><LevelMark y={638} />
  </Drawing>
);

const SiteDrawing = () => (
  <Drawing fill="none" stroke="#111" shapeRendering="crispEdges">
    <path d="M584 261l171-34 142 12 120 30-5 190-7 189-217-4-227-4 15-257z" />
    <path d="M1017 269L891 465l-8 81-114 4-98 37-110 53M1012 459l-64 98-4 40-47 21-109 26M576 383l102 4M575 404l106 4" />
    <path d="M678 388v-19c2-14 8-30 29-34 6 0 10 1 13 2l165 39v12l-2 158-203-5v-134l-3-19" />
    <path d="M682 369c2-16 12-29 26-31 6 0 9 1 12 3l166 44M685 369c2-14 10-25 23-28M686 369l6 168h63V425M682 372l8 168h66M679 372l10 168M720 343l165 46M719 345l165 46v63l-125-26M720 340l165 47" />
    <path d="M692 538h63M689 541h68" strokeWidth="2" />
    <path d="M885 388v67" strokeWidth="2" />
    <path d="M756 425l127 28M757 430l126 25M788 432l95 20" />
    <path d="M759.500 428l-2 113M756 426l-1 115" />
    <path d="M754 477h-28l2-83c0-2 3-3 6-2l56 11v29M754 475h-26l2-80c0-1 3-2 5-1l53 10v27" />
    <g stroke="#12358c" shapeRendering="auto">
      <path d="M697 342l10 17h-20z" strokeWidth="2" />
      <circle cx="697" cy="353" r="7" /><path d="M693 354h8M697 348v11M694 351l6 7M700 351l-6 7" />
    </g>
  </Drawing>
);

const RoofDrawing = () => (
  <Drawing fill="none" stroke="#9b9b9b" shapeRendering="crispEdges">
    <path d="M720 201l-17 85-12 35c-3 14-4 24 3 32 6 9 14 12 24 11l170-12" stroke="#a6a6a6" strokeWidth="9" shapeRendering="auto" />
    <path d="M715 201l-17 85-13 40c-4 18-2 30 10 38 7 5 15 6 24 5l168-14" shapeRendering="auto" />
    <path d="M712 201l-15 80-14 40c-4 20-1 34 11 43 7 5 16 6 26 5" shapeRendering="auto" />
    <path d="M720 201l-17 85-12 35c-3 14-4 24 3 32 6 9 14 12 24 11l170-12" stroke="#dedede" strokeDasharray="7 5" shapeRendering="auto" />
    <path d="M724 201l-22 121c-5 22 4 32 20 33l166-3" strokeWidth="2" stroke="#85858f" shapeRendering="auto" />
    <path d="M788 201l-15 86M786 201l-21 119M746 258l-8 62" stroke="#8b8b97" strokeWidth="2" shapeRendering="auto" />
    <path d="M884 201v152M888 201v152" stroke="#8f8f9a" />
    <path d="M886 289v64" strokeWidth="4" />
    <path d="M772 290h50M736 319h86" strokeWidth="3" />
    <path d="M772 287h116M874.500 290v62M822 289h64" />
    <path d="M822 288h52" strokeWidth="3" />
    <path d="M743 318h24" strokeWidth="5" />
    <path d="M793 293h15v20h-15z" fill="#a8a8a8" />
    <path d="M798 296h4v6h-4zM798 306h4v4h-4z" fill="#fff" />
    <path d="M783 310h7v17h-7zM783 318h7M808 304h10M818 298c-4 1-5 3-5 6M818 312c-6 1-8 3-8 8M794 314c4 1 4 5 2 10M825 322v10M828 322l-5 6 5 5M747 261c5 1 6 4 4 8M747 272h4v3h-4M772 262h4v14h-4zM767 280h5v6h-5M733 252v6h10v-6l-5 3z" />
    <path d="M747 217l5 3-18 27-5-3zM755 216l5 1 6 19-5 1zM739 240l24-4M748 217h10" />
    <g stroke="#7c7c94">
      <path d="M677 226.500h220M677 257.500h220M677 289.500h220M677 320.500h220M677 351.500h220M791.500 201v170M822.500 201v170M853.500 201v170M884.500 201v170" />
      <path d="M723 201l-30 170M755 201l-30 175M789 201l-34 181" shapeRendering="auto" />
    </g>
    <path d="M697.500 201v154" stroke="#6f4046" strokeDasharray="3 2 1 2" />
    <path d="M897 351.500h138" stroke="#4d362c" strokeDasharray="2 2 1 1" />
    <path d="M815 304h3v3h-3zM676 226h2v2h-2zM676 257h2v2h-2zM676 289h2v2h-2zM676 320h2v2h-2zM676 351h2v2h-2zM896 226h2v2h-2zM896 257h2v2h-2zM896 289h2v2h-2zM896 320h2v2h-2zM896 351h2v2h-2zM790 370h3v2h-3zM821 370h3v2h-3zM852 370h3v2h-3zM883 370h3v2h-3zM691 371h3v2h-3zM723 376h3v2h-3zM754 382h3v2h-3z" fill="#111" stroke="none" />
  </Drawing>
);

/* ---------- view control bar ---------- */

const viewIcons = (coarse: boolean): React.ReactNode[] => [
  coarse
    ? <Svg key="a"><path d="M.5 2.500h15v10H.5z" fill="#eef0f8" /></Svg>
    : <Svg key="a"><path d="M.5 2.500h15v11H.5z" fill="#fff" /><path d="M1 3h4v3H1zM11 3h4v3h-4zM5 6h6v4H5zM1 10h4v3H1zM11 10h4v3h-4z" fill="#667" stroke="none" /><path d="M0 2.500h16" /></Svg>,
  <Svg key="b"><path d="M1 7l4-5h10v6l-4 6H1zM1 7h10v7M11 7l4-5" fill="#f6f6f6" /></Svg>,
  <Svg key="c"><circle cx="7" cy="7" r="4" fill="#ffe48a" stroke="#d48a14" /><path d="M7 0v2M0 7h2M2 2l1 1M12 2l-1 1M2 12l1-1" stroke="#d48a14" /><RedX x={9} y={8} /></Svg>,
  <Svg key="d"><circle cx="7" cy="6" r="3.500" stroke="#bbb" /><path d="M2 13h6" stroke="#bbb" strokeWidth="2" /><path d="M9 8l6 6M15 8l-6 6" stroke="#bbb" strokeWidth="2" /></Svg>,
  <Svg key="e"><path d="M0 6h4V3h11M2 14V8h5M7 3v11M0 10h2M11 3v5" stroke="#2b5d94" strokeWidth="1.500" /><RedX x={9} y={8} /></Svg>,
  <Svg key="f"><path d="M0 6h4V3h11M2 14V8h5M7 3v9M0 10h2" stroke="#2b5d94" strokeWidth="1.500" /><circle cx="12" cy="8" r="3" fill="#fff" stroke="#2b5d94" /><path d="M11 12h2v3h-2z" stroke="#555" /></Svg>,
  <Svg key="g"><path d="M0 4l3 5c0 4 5 4 5 0 2-1 2 3 5 2 3-2 1-5-1-5M3 9c1-2 4-2 5 0M11 9c0-4 1-6 4-5" /></Svg>,
  <Svg key="h"><circle cx="8" cy="6" r="3" fill="#dceafa" stroke="#2f6fb0" /><path d="M7 10h2v4H7z" stroke="#2f6fb0" /></Svg>,
  <Svg key="i"><path d="M1.500 3.500h12v10h-12z" strokeDasharray="3 1" strokeWidth="1.500" /><path d="M8 8h7v6H8z" fill="#fff" /><path d="M10 10h3v2h-3z" /></Svg>,
  <Svg key="j"><path d="M1 9l5-6h8M3 14V8h6M9 4v10M1 11h11M6 8v6" stroke="#aaa" /></Svg>,
  <Svg key="k"><path d="M1 3h14M1 1v4M15 1v4M1 6v8M1 14h6" strokeDasharray="3 1" /><path d="M9 9h6v5H9zM10.500 9V7h3v2" fill="#ccc" /></Svg>,
];

const NavWidget = () => (
  <NavBar>
    <IconButton aria-label="Leiste schließen"><Svg w={9} vb="0 0 9 9"><circle cx="4.500" cy="4.500" r="3.500" stroke="#999" /><path d="M3 3l3 3M6 3L3 6" stroke="#999" /></Svg></IconButton>
    <IconButton aria-label="Steuerrad 2D">
      <Svg w={28} h={34} vb="0 0 28 34">
        <path d="M12 8h9v9c0 5-4 9-9 9a9 9 0 0 1 0-18z" fill="#eceef0" stroke="#8c93a0" />
        <circle cx="12" cy="17" r="4" fill="#fff" stroke="#8c93a0" />
        <text x="14" y="29" fontSize="9" fontFamily="Liberation Sans, sans-serif" fontWeight="700" fill="#8fa0cc" stroke="none">2D</text>
      </Svg>
    </IconButton>
    <Down color="#888" />
    <NavLine />
    <IconButton aria-label="Zoom">
      <Svg w={20} h={18} vb="0 0 20 18"><path d="M2.500 1.500h11v11h-11z" fill="#b5d7ae" stroke="#88b980" /><circle cx="13" cy="11" r="3.500" fill="#f7f7f7" stroke="#888" /><path d="M15.500 13.500l3 3.500" stroke="#888" strokeWidth="2" /></Svg>
    </IconButton>
    <NavSpace />
    <Down color="#888" />
    <NavSpace />
    <IconButton aria-label="Leiste anpassen"><Svg w={9} vb="0 0 9 9"><circle cx="4.500" cy="4.500" r="3.500" stroke="#999" /><path d="M3 4.500h3" stroke="#999" strokeWidth="2" /></Svg></IconButton>
  </NavBar>
);
const Grip = styled.span`
  width: 15px;
  height: 15px;
  margin-right: 1px;
  padding: 4px;
`;

type Doc = { icon: "plan" | "section"; t: string; active?: boolean };
type DocProps = { docs: Doc[]; scale: string; coarse?: boolean; v: ScrollProps; h: ScrollProps; children: React.ReactNode };
const Documents = ({ docs, scale, coarse, v, h, children }: DocProps) => (
  <Docs>
    <DocTabs role="tablist">
      {docs.map((d) => (
        <DocTab key={d.t} $active={d.active}>
          {d.icon === "plan" ? (d.active ? I.plan : I.planDim) : d.active ? I.section : I.sectionDim}
          <DocLabel role="tab" aria-selected={!!d.active}>{d.t}</DocLabel>
          <CloseSlot>{d.active && <IconButton aria-label="Ansicht schließen"><Cross /></IconButton>}</CloseSlot>
        </DocTab>
      ))}
      <TabList aria-label="Alle Ansichten"><Down s={8} /></TabList>
    </DocTabs>
    <CanvasRow>
      <Canvas>{children}<NavWidget /></Canvas>
      <VScroll {...v} />
    </CanvasRow>
    <ViewBar>
      <Scale>{scale}</Scale>
      <ViewIcons>{viewIcons(!!coarse)}</ViewIcons>
      <ArrowBtn aria-label="Nach links"><Chevron dir="left" /></ArrowBtn>
      <HTrack><Gap $grow={h.before} /><ScrollThumb $len={h.len} $h /><Gap $grow={h.after} /></HTrack>
      <ArrowBtn aria-label="Nach rechts"><Chevron dir="right" /></ArrowBtn>
      <Grip><Svg w={8} vb="0 0 8 8"><path d="M6 0h2M3 3h5M0 6h8" stroke="#aaa" strokeDasharray="2 1" strokeWidth="2" /></Svg></Grip>
    </ViewBar>
  </Docs>
);

const statusIcons = [
  { t: "Verknüpfungen wählen", d: <path d="M2 4h6v4H2zM9 4h6v4H9z" stroke="#c79a1a" strokeWidth="2" /> },
  { t: "Unterlagen wählen", d: <><path d="M1 11l7-8v8zM1 14h9" fill="#bcd4ee" stroke="#335a8c" /><RedX x={10} y={1} s={5} /></> },
  { t: "Fixierte wählen", d: <path d="M3 2h9v3h-2v4h3v2H2V9h3V5H3zM7 11v5" fill="#f2b07a" stroke="#b8601c" /> },
  { t: "Nach Fläche wählen", d: <><path d="M2 5l6-3v11l-6 3z" fill="#9cc8ee" stroke="#2f6fb0" /><RedX x={10} y={1} s={5} /></> },
  { t: "Elemente ziehen", d: <path d="M6 1v10M1 6h10M4 3l2-2 2 2M4 9l2 2 2-2M3 4L1 6l2 2M9 4l2 2-2 2" stroke="#111" /> },
];

const Status = ({ text }: { text: string }) => (
  <StatusBar>
    <StatusText>{text}</StatusText>
    <StatusGroup>
      <Svg><path d="M1 8l3-3 3 2v8H1zM7 3l3-2 3 2v5l3 2v5H7z" fill="#aaa" stroke="#888" /></Svg>
      <SelectWrap $w={204} $h={20} $plain><Select aria-label="Bearbeitungsbereich"><option></option></Select><Chevron bold={false} color="#999" /></SelectWrap>
      <Svg><path d="M5 1h10v4l-4 3v3H8V8H5zM2 10h5v5H2z" fill="#aaa" stroke="#999" /></Svg>
      <Zero>:0</Zero>
      <Svg><path d="M.5.5h15v15H.5z" fill="#f4f4f4" strokeWidth="1.500" /><path d="M1 2.500h14" strokeWidth="2" /><path d="M3 6.500h2M7 6.500h5M5 9.500h1M8 9.500h5M5 12.500h1M8 12.500h5" /></Svg>
      <Svg><path d="M4 1h11v14H4z" fill="#999" stroke="none" /><path d="M0 9h8M5 6l3 3-3 3" stroke="#fff" /></Svg>
      <SelectWrap $w={204} $h={20} $plain><Select $dim aria-label="Entwurfsoption"><option>Basisvorlage</option></Select><Chevron bold={false} color="#999" /></SelectWrap>
    </StatusGroup>
    <StatusRight>
      {statusIcons.map((ic) => <IconButton key={ic.t} aria-label={ic.t}><Svg w={18} h={18} vb="0 0 18 18">{ic.d}<g transform="translate(9 6) scale(.7)"><Arrow /></g></Svg></IconButton>)}
    </StatusRight>
  </StatusBar>
);

const Brand = () => <Watermark><span>Linked</span><InBox>in</InBox><span>Learning</span></Watermark>;

/* ---------- data for the three windows ---------- */

const tree1: TNode[] = [
  { l: 1, t: "Heizung", x: "+" }, { l: 1, t: "Koordination", x: "-" }, { l: 2, t: "Grundrisse", x: "-" },
  { l: 3, t: "Ebene 0 Koordination" }, { l: 3, t: "Ebene 0 Koordination Lageplan" }, { l: 3, t: "Ebene 1 Koordination", end: true },
  { l: 2, t: "Deckenpläne", x: "+" }, { l: 2, t: "3D-Ansichten", x: "+" }, { l: 2, t: "Schnitte", x: "-" },
  { l: 3, t: "Schnitt Ebenenansicht", end: true, bold: true, look: "gray" }, { l: 1, t: "Kälte", x: "+" }, { l: 1, t: "Lüftung", x: "+" },
];
const tree2: TNode[] = [
  ...tree1.slice(0, 3), { l: 3, t: "UG 1- OK RFB", bold: true, look: "blue" },
  { l: 3, t: "Ebene 0 Koordination" }, { l: 3, t: "Ebene 0 Koordination Lageplan" }, { l: 3, t: "Ebene 1 Koordination" },
  { l: 3, t: "OG 2- OK RFB" }, { l: 3, t: "Dach- OK RFB", end: true }, ...tree1.slice(6, 9),
];
const tree3: TNode[] = [
  { l: 1, t: "Heizung", x: "-" }, { l: 2, t: "Grundrisse", x: "-" }, { l: 3, t: "Ebene -1 Heizung" }, { l: 3, t: "Ebene 0 Heizung" },
  { l: 3, t: "Legende Flächenplan Heizung" }, { l: 3, t: "Ebene 1 Heizung" }, { l: 3, t: "Ebene 2 Hei", edit: true },
  { l: 3, t: "Ebene Dach Koordination(1)", bold: true, end: true }, { l: 2, t: "3D-Ansichten", x: "+" },
  { l: 1, t: "Koordination", x: "-" }, { l: 2, t: "Grundrisse", x: "-" }, { l: 3, t: "Ebene -1 Koordination" },
];
const props1: Prop[] = [
  { group: "Abhängigkeiten" }, { name: "Projektbrowser Glieder...", dim: true }, { group: "Grafiken" },
  { name: "Ansichtsmaßstab", value: <>&nbsp;1 : 50</>, dim: true }, { name: "Maßstabswert 1:", value: "50", dim: true },
  { name: "Modell anzeigen", value: "Normal", dim: true }, { name: "Detaillierungsgrad", value: "Mittel", dim: true },
];
const props2: Prop[] = [
  { name: "Bildausschnitt" }, { name: "Höhenschnitt", dim: true }, { group: "ID-Daten" }, { name: "Ansichtsvorlage" },
  { name: "Ansichtsname" }, { name: "Abhängigkeit", dim: true }, { name: "Titel auf Plan" },
];
const props3: Prop[] = [
  { name: "Höhenschnitt", dim: true, value: <ValueButton $dim disabled>Nicht zuschneiden</ValueButton> }, { group: "ID-Daten" },
  { name: "Ansichtsvorlage", value: <ValueButton>Heizung 1/50 mittel</ValueButton> },
  { name: "Ansichtsname", value: <ValueInput aria-label="Ansichtsname" defaultValue="Ebene 2 Koordination(1)" /> },
  { name: "Abhängigkeit", value: "Unabhängig", dim: true }, { name: "Titel auf Plan" }, { name: "Referenzierter Plan", dim: true },
];

export default function App() {
  return (
    <>
      <Global />
      <Frame>
        <Title text="Projekt5 - Schnitt: Schnitt Ebenenansicht" dim />
        <Tabs more />
        <CopyRibbon />
        <OptionsBar $teal>Kopieren/Überwachen</OptionsBar>
        <Workspace>
          <LeftDock
            thumb={SectionThumb} type={"Schnitt\nSchnitt Koordination 1/50 mittel"} instance="Schnitt: Schnitt Ebenenansicht"
            props={props1} tree={tree1} grid={{ before: 0, after: 61, len: 17 }} treeScroll={{ before: 26, after: 59, len: 100, dark: true }}
          />
          <Documents
            docs={[{ icon: "plan", t: "Ebene 0 Koordination" }, { icon: "section", t: "Schnitt Ebenenansicht", active: true }]}
            scale="1 : 50" v={{ before: 213, after: 211, len: 17 }} h={{ before: 291, after: 294, len: 17 }}
          ><SectionDrawing /></Documents>
        </Workspace>
        <Status text="Zur Auswahl klicken, TABULATOR für andere Auswahl, STRG z" />
        <PointerCursor x={177} y={86} />
        <Brand />
      </Frame>
      <Frame>
        <Title text="Projekt5 - Grundriss: UG 1- OK RFB" />
        <Tabs active="Ansicht" />
        <ViewRibbon />
        <OptionsBar />
        <Workspace>
          <LeftDock
            thumb={PlanThumb} type="Grundriss" instance="Grundriss: UG 1- OK RFB"
            props={props2} tree={tree2} grid={{ before: 50, after: 10, len: 17 }} treeScroll={{ before: 26, after: 74, len: 85, dark: true }}
          />
          <Documents
            docs={[{ icon: "plan", t: "Ebene 0 Koordination" }, { icon: "section", t: "Schnitt Ebenenansicht" }, { icon: "plan", t: "UG 1- OK RFB", active: true }]}
            scale="1 : 500" coarse v={{ before: 143, after: 281, len: 17 }} h={{ before: 194, after: 391, len: 17 }}
          ><SiteDrawing /></Documents>
        </Workspace>
        <Status text="" />
        <ContextMenu />
        <PointerCursor x={202} y={362} />
        <Brand />
      </Frame>
      <Frame>
        <Title text="Projekt5 - Grundriss: Ebene Dach Koordin..." />
        <Tabs active="Ansicht" />
        <ViewRibbon />
        <OptionsBar />
        <Workspace>
          <LeftDock
            thumb={PlanThumb} type="Grundriss" instance="Grundriss: Ebene 2 Koordination("
            props={props3} tree={tree3} grid={{ before: 51, after: 10, len: 17 }} treeScroll={{ before: 17, after: 100, len: 68, dark: true }}
          />
          <Documents
            docs={[{ icon: "plan", t: "Ebene 0 Koordination" }, { icon: "section", t: "Schnitt Ebenenansicht" }, { icon: "plan", t: "Ebene -1 Koordination" }, { icon: "plan", t: "Ebene Dach Koordination(1)", active: true }]}
            scale="1 : 50" v={{ before: 0, after: 424, len: 17 }} h={{ before: 0, after: 585, len: 17 }}
          ><RoofDrawing /></Documents>
        </Workspace>
        <Status text="Bereit" />
        <PointerCursor x={155} y={584} />
        <Brand />
      </Frame>
    </>
  );
}
